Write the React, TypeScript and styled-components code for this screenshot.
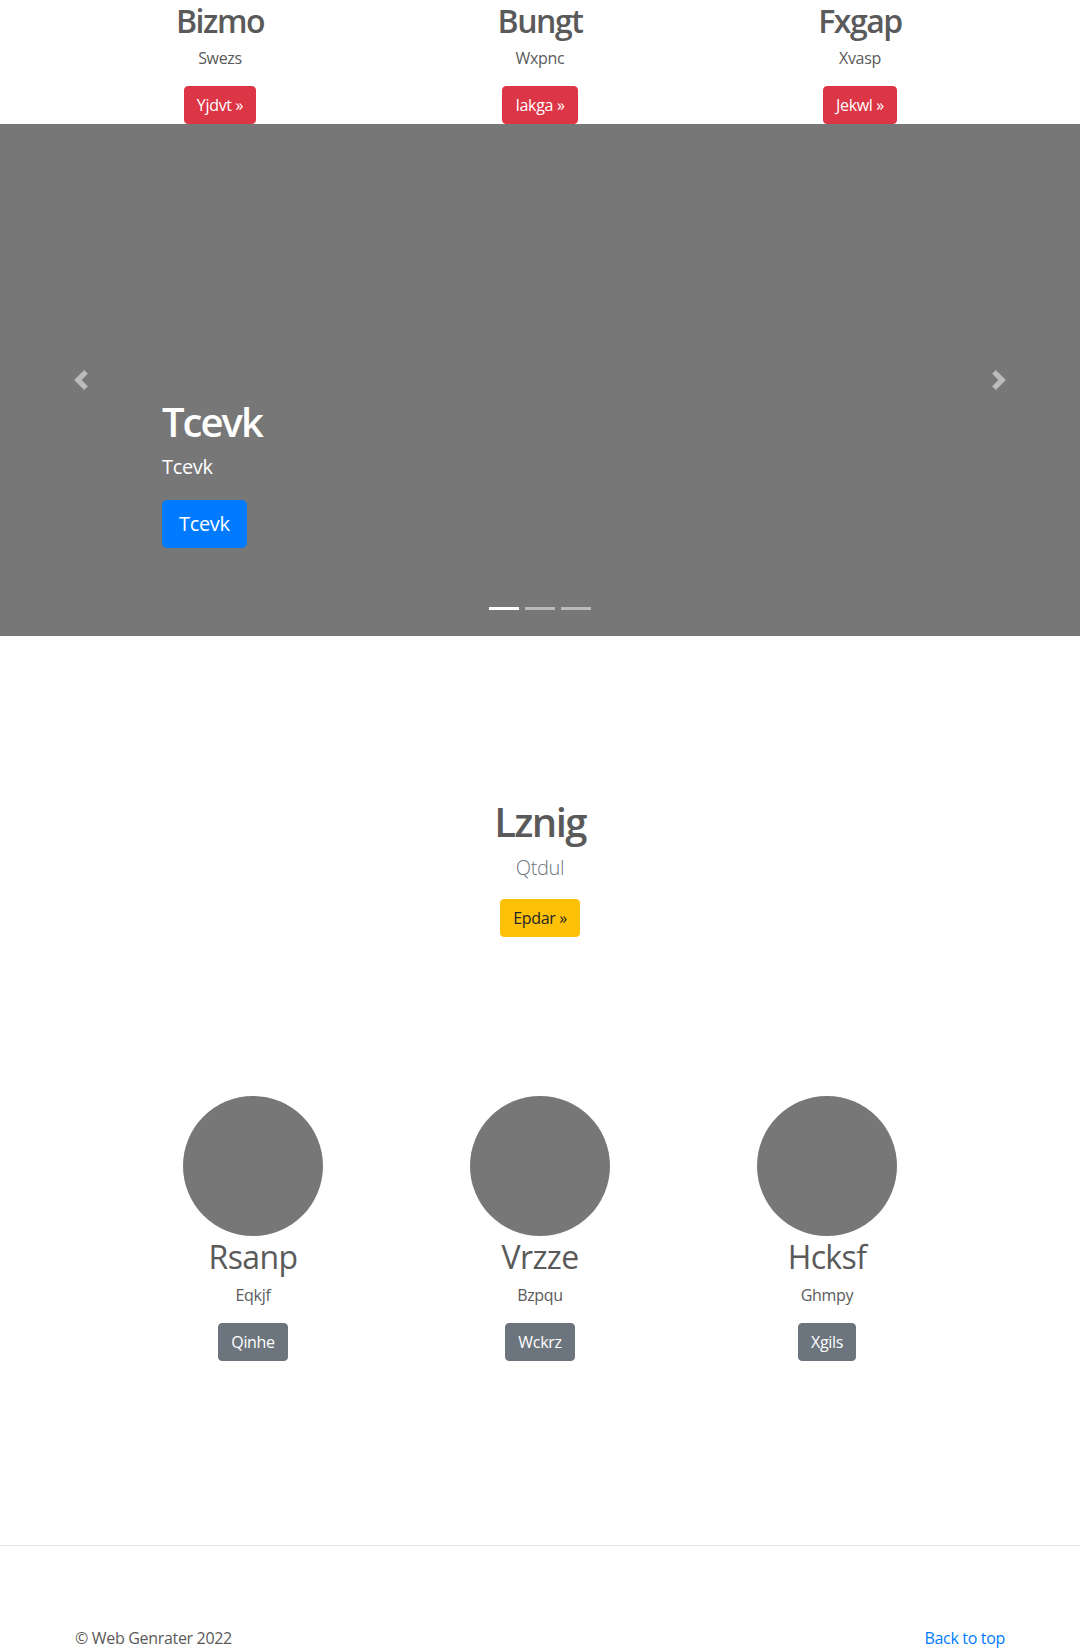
import React from "react";
import styled, { createGlobalStyle, css } from "styled-components";

const GlobalStyle = createGlobalStyle`
  html, body { margin: 0; padding: 0; background: #fff; }
  body {
    font-family: "Open Sans", "Noto Sans", Arial, sans-serif;
    font-size: 16px;
    line-height: 1.5;
    color: #5a5a5a;
    letter-spacing: -0.02em;
  }
  * { box-sizing: border-box; }
`;

const Container = styled.div<{ $width?: number }>`
  width: ${(p) => p.$width ?? 960}px;
  margin: 0 auto;
  padding: 0 15px;
`;

const ThreeCols = styled.div<{ $width: number }>`
  width: ${(p) => p.$width}px;
  margin: 0 auto;
  display: grid;
  grid-template-columns: repeat(3, 1fr);
  text-align: center;
`;

const Col = styled.div`
  padding: 0 15px;
  display: flex;
  flex-direction: column;
  align-items: center;
`;

const Heading = styled.h2<{ $light?: boolean }>`
  margin: 0 0 6px;
  padding-top: 2px;
  font-size: 32px;
  line-height: 1.2;
  font-weight: ${(p) => (p.$light ? 400 : 600)};
  letter-spacing: ${(p) => (p.$light ? "-0.02em" : "-0.045em")};
  color: #5a5a5a;
`;

const Text = styled.p`
  margin: 0 0 16px;
  font-size: 16px;
  line-height: 1.5;
`;

type Variant = "danger" | "primary" | "warning" | "secondary";

const variants: Record<Variant, ReturnType<typeof css>> = {
  danger: css`background: #dc3545; border-color: #dc3545; color: #fff;`,
  primary: css`background: #007bff; border-color: #007bff; color: #fff;`,
  warning: css`background: #ffc107; border-color: #ffc107; color: #212529;`,
  secondary: css`background: #6c757d; border-color: #6c757d; color: #fff;`,
};

const Button = styled.a<{ $variant: Variant; $large?: boolean }>`
  display: inline-block;
  text-decoration: none;
  font-weight: 400;
  border: 1px solid transparent;
  font-size: ${(p) => (p.$large ? 20 : 16)}px;
  line-height: 1.5;
  padding: ${(p) => (p.$large ? "8px 16px" : "6px 12px")};
  border-radius: ${(p) => (p.$large ? 4.8 : 4)}px;
  cursor: pointer;
  ${(p) => variants[p.$variant]}
`;

const Carousel = styled.section`
  position: relative;
  height: 512px;
  background: #777;
  overflow: hidden;
`;

const Caption = styled.div`
  position: absolute;
  left: 15%;
  right: 15%;
  bottom: 88px;
  color: #fff;
  display: flex;
  flex-direction: column;
  align-items: flex-start;
  z-index: 10;
`;

const CaptionTitle = styled.h1`
  margin: 0 0 6px;
  font-size: 40px;
  line-height: 1.2;
  font-weight: 600;
  letter-spacing: -0.05em;
`;

const CaptionText = styled.p`
  margin: 0 0 18px;
  font-size: 20px;
  line-height: 1.5;
`;

const Control = styled.a<{ $side: "left" | "right" }>`
  position: absolute;
  top: 0;
  bottom: 0;
  ${(p) => p.$side}: 0;
  width: 15%;
  display: flex;
  align-items: center;
  justify-content: center;
  opacity: 0.5;
  z-index: 5;
`;

const Indicators = styled.ol`
  position: absolute;
  left: 15%;
  right: 15%;
  bottom: 26px;
  margin: 0;
  padding: 0;
  list-style: none;
  display: flex;
  justify-content: center;
  z-index: 15;
`;

const Indicator = styled.li<{ $active?: boolean }>`
  width: 30px;
  height: 3px;
  margin: 0 3px;
  background: #fff;
  opacity: ${(p) => (p.$active ? 1 : 0.5)};
`;

const Featurette = styled.section`
  padding: 162px 0 159px;
  display: flex;
  flex-direction: column;
  align-items: center;
  text-align: center;
`;

const FeatTitle = styled.h1`
  margin: 0 0 7px;
  font-size: 40px;
  line-height: 1.2;
  font-weight: 600;
  letter-spacing: -0.04em;
  color: #5a5a5a;
`;

const Lead = styled.p`
  margin: 0 0 16px;
  font-size: 20px;
  line-height: 1.5;
  font-weight: 300;
  color: #6c757d;
`;

const Circle = styled.svg`
  display: block;
  border-radius: 50%;
`;

const Divider = styled.hr`
  margin: 184px 0 0;
  border: 0;
  border-top: 1px solid rgba(0, 0, 0, 0.1);
  height: 0;
`;

const Footer = styled(Container)`
  margin-top: 80px;
  display: flex;
  justify-content: space-between;
  font-size: 16px;
  line-height: 1.5;
`;

const FooterText = styled.p`
  margin: 0;
`;

const Link = styled.a`
  color: #007bff;
  text-decoration: none;
`;

const Chevron = ({ dir }: { dir: "prev" | "next" }) => (
  <svg width="20" height="20" viewBox="0 0 8 8" fill="#fff">
    <path
      d={
        dir === "prev"
          ? "M5.25 0l-4 4 4 4 1.5-1.5L4.25 4l2.5-2.5L5.25 0z"
          : "M2.75 0l-1.5 1.5L3.75 4l-2.5 2.5L2.75 8l4-4-4-4z"
      }
    />
  </svg>
);

const top = [
  { title: "Bizmo", text: "Swezs", btn: "Yjdvt »" },
  { title: "Bungt", text: "Wxpnc", btn: "Iakga »" },
  { title: "Fxgap", text: "Xvasp", btn: "Jekwl »" },
];

const people = [
  { title: "Rsanp", text: "Eqkjf", btn: "Qinhe" },
  { title: "Vrzze", text: "Bzpqu", btn: "Wckrz" },
  { title: "Hcksf", text: "Ghmpy", btn: "Xgils" },
];

export default function App() {
  return (
    <>
      <GlobalStyle />
      <ThreeCols $width={960}>
        {top.map((c) => (
          <Col key={c.title}>
            <Heading>{c.title}</Heading>
            <Text>{c.text}</Text>
            <Button $variant="danger">{c.btn}</Button>
          </Col>
        ))}
      </ThreeCols>

      <Carousel>
        <Control $side="left">
          <Chevron dir="prev" />
        </Control>
        <Caption>
          <CaptionTitle>Tcevk</CaptionTitle>
          <CaptionText>Tcevk</CaptionText>
          <Button $variant="primary" $large>
            Tcevk
          </Button>
        </Caption>
        <Control $side="right">
          <Chevron dir="next" />
        </Control>
        <Indicators>
          <Indicator $active />
          <Indicator />
          <Indicator />
        </Indicators>
      </Carousel>

      <Featurette>
        <FeatTitle>Lznig</FeatTitle>
        <Lead>Qtdul</Lead>
        <Button $variant="warning">Epdar »</Button>
      </Featurette>

      <ThreeCols $width={861}>
        {people.map((c) => (
          <Col key={c.title}>
            <Circle width="140" height="140" viewBox="0 0 140 140">
              <rect width="140" height="140" fill="#777" />
            </Circle>
            <Heading $light>{c.title}</Heading>
            <Text>{c.text}</Text>
            <Button $variant="secondary">{c.btn}</Button>
          </Col>
        ))}
      </ThreeCols>

      <Divider />

      <Footer>
        <FooterText>© Web Genrater 2022</FooterText>
        <Link href="#">Back to top</Link>
      </Footer>
    </>
  );
}
